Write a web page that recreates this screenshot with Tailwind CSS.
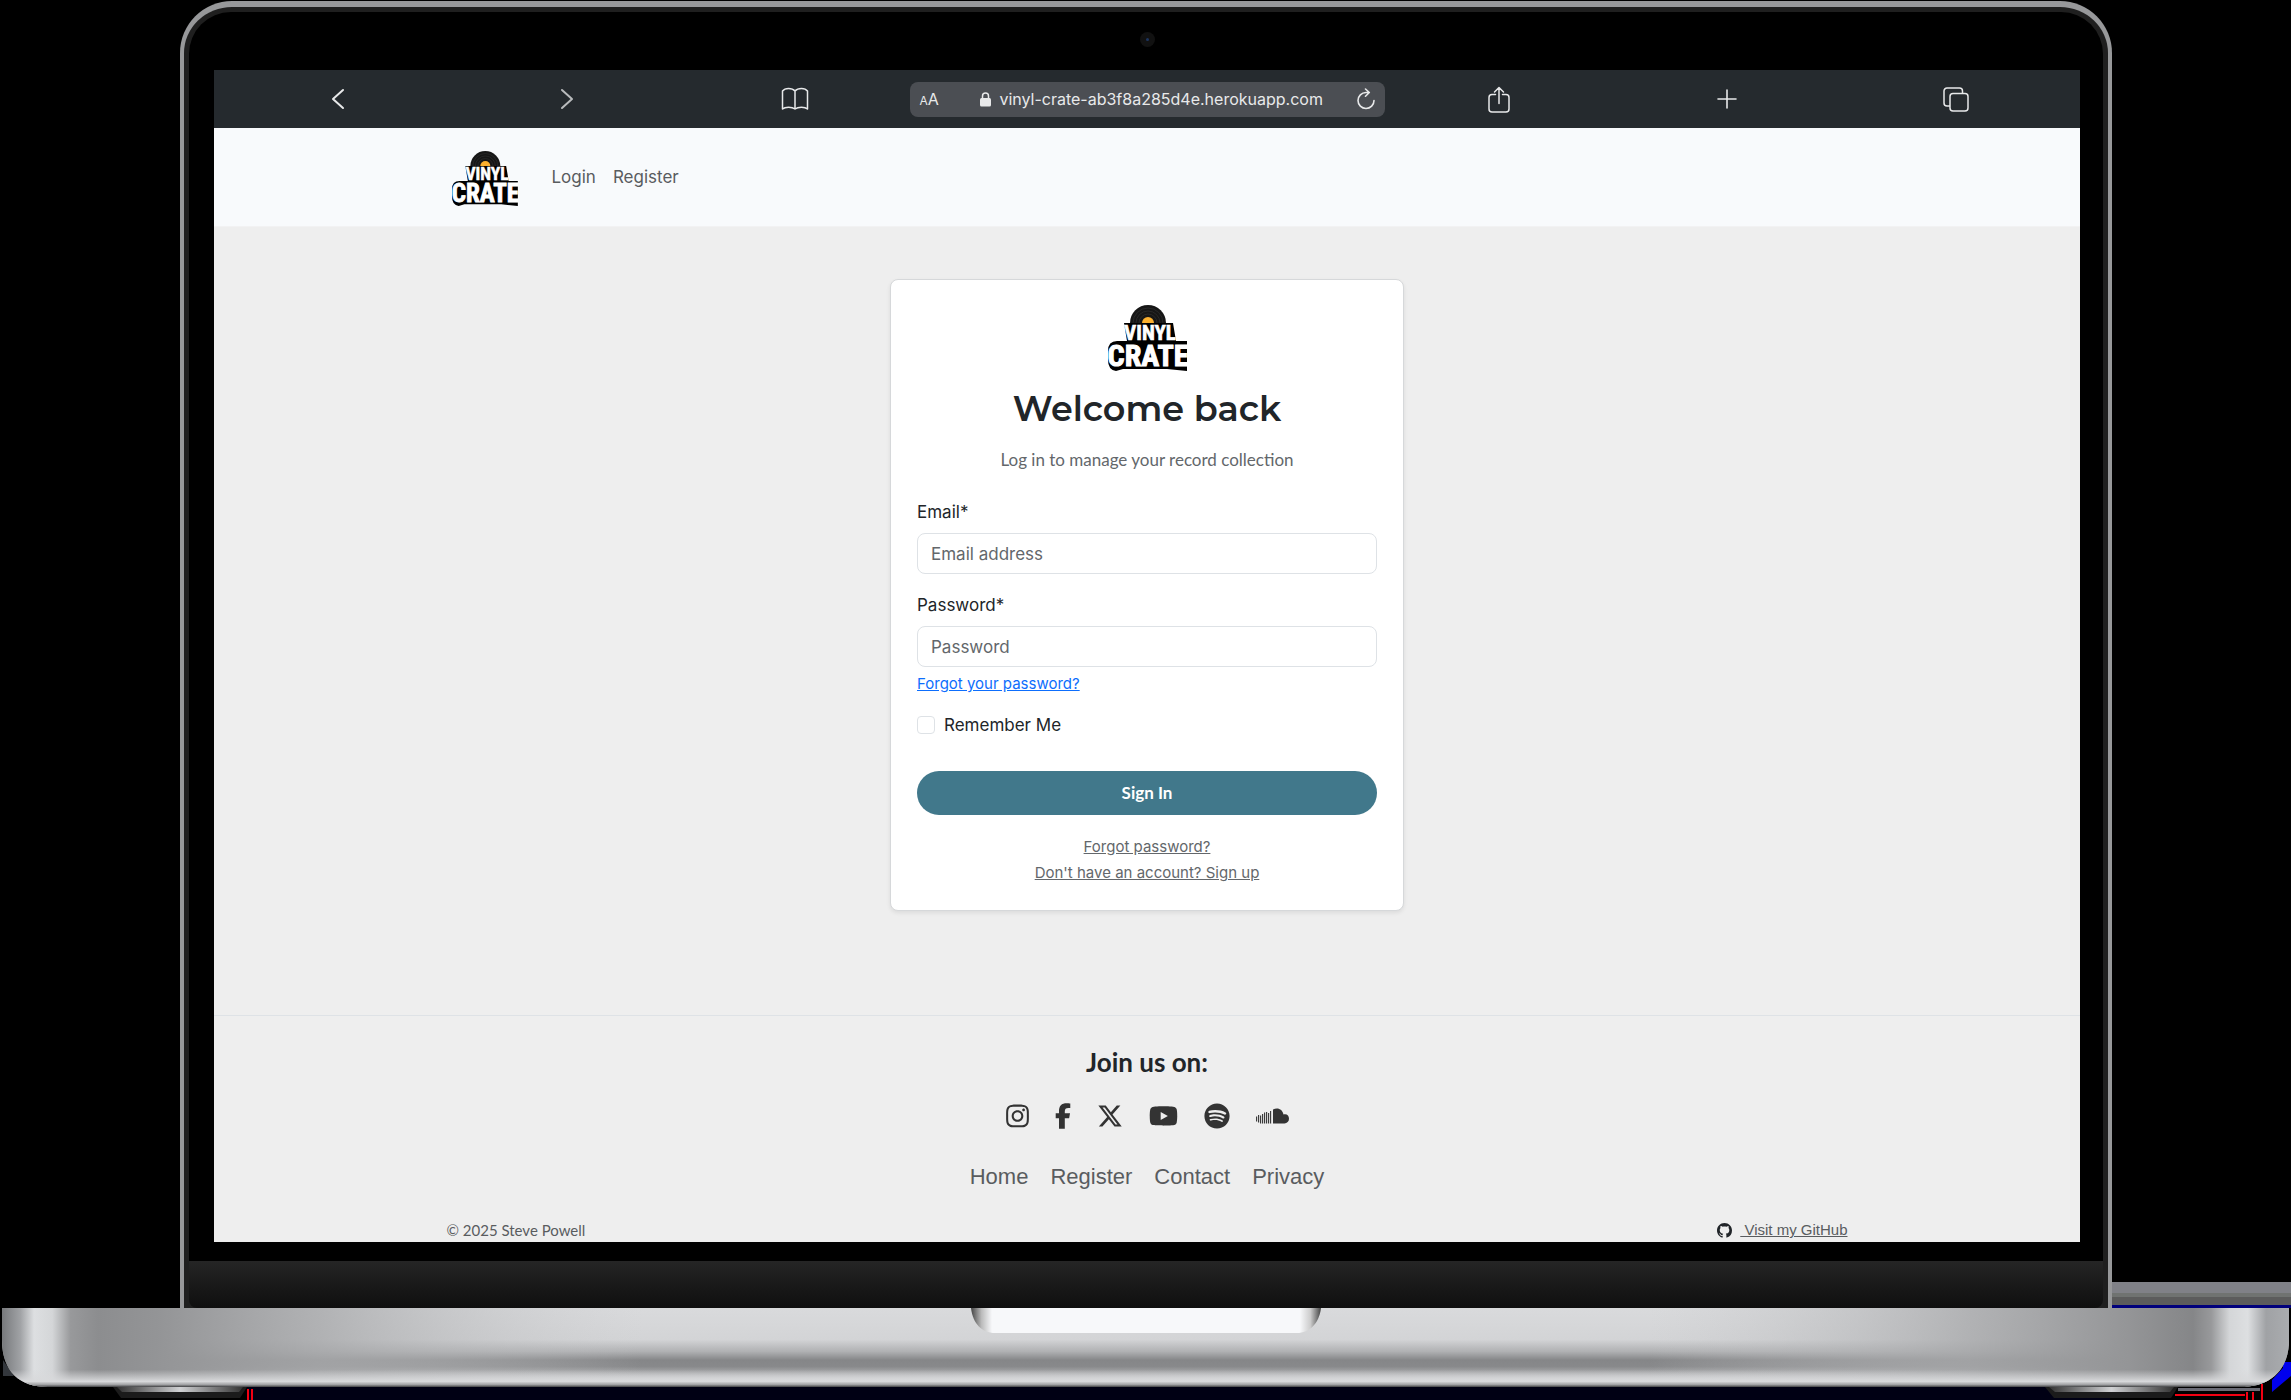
<!DOCTYPE html>
<html lang="en">
<head>
<meta charset="utf-8">
<meta name="viewport" content="width=device-width, initial-scale=1">
<title>Vinyl Crate</title>
<script src="https://cdn.jsdelivr.net/npm/@tailwindcss/browser@4"></script>
</head>
<body class="bg-black font-[Inter,sans-serif] text-[#212529]">
<svg class="hidden">
  <symbol id="logo" viewBox="0 0 80 66">
    <circle cx="41" cy="18" r="18" fill="#161616"/>
    <g fill="none" stroke="#343434" stroke-width=".6"><circle cx="41" cy="18" r="15"/><circle cx="41" cy="18" r="12"/><circle cx="41" cy="18" r="9"/></g>
    <circle cx="41" cy="18" r="6" fill="#fbb02f"/>
    <path d="M17 18H66L69 36H80V66L60 64H16L9 66Q1 65 1 55V46Q1 36 10 36H20Z" fill="#000"/>
    <g font-family="'Liberation Sans Narrow','Roboto Condensed','Liberation Sans',sans-serif" font-weight="700" fill="#fff" text-anchor="middle" stroke="#fff">
      <text x="43" y="35" font-size="21" stroke-width=".6">VINYL</text>
      <text x="41" y="61" font-size="30" stroke-width="1">CRATE</text>
    </g>
  </symbol>
</svg>
<div class="flex h-screen flex-col overflow-hidden">
  <!-- Laptop lid -->
  <div class="relative mr-[179px] ml-[180px] mt-px flex min-h-0 flex-1 flex-col rounded-t-[52px] border-x-4 border-t-[6px] border-[#97989a] bg-[#1f1f1f] px-[5px] pt-[5px]">
    <div class="flex min-h-0 flex-1 flex-col rounded-t-[42px] bg-black pr-[23px] pb-[19px] pl-[25px]">
      <div class="flex h-[58px] shrink-0 items-center justify-center pb-1"><div class="flex size-[15px] items-center justify-center rounded-full bg-[#111]"><div class="size-[3px] rounded-full bg-[#1d3560]"></div></div></div>
      <!-- Browser window -->
      <div class="flex min-h-0 flex-1 flex-col overflow-hidden bg-[#eeeeee]">
        <div class="flex h-[58px] shrink-0 items-center bg-[#252a2e] text-[#e8e9ea]">
          <div class="grid flex-1 grid-cols-3 justify-items-center pl-[10px]">
            <button aria-label="Back"><svg class="h-6 w-6" viewBox="0 0 24 24" fill="none" stroke="currentColor" stroke-width="2" stroke-linecap="round" stroke-linejoin="round"><path d="M17 3 7 12l10 9"/></svg></button>
            <button aria-label="Forward" class="text-[#b9bbbd]"><svg class="h-6 w-6" viewBox="0 0 24 24" fill="none" stroke="currentColor" stroke-width="2" stroke-linecap="round" stroke-linejoin="round"><path d="M7 3 17 12 7 21"/></svg></button>
            <button aria-label="Bookmarks"><svg class="h-6 w-7" viewBox="0 0 28 24" fill="none" stroke="currentColor" stroke-width="1.5" stroke-linejoin="round"><path d="M14 4C11 .5 4 .5 1.500 4V22C4 19.500 11 19.500 14 22 17 19.500 24 19.500 26.500 22V4C24 .5 17 .5 14 4ZM14 4V22"/></svg></button>
          </div>
          <div class="flex h-[35px] w-[475px] items-center rounded-lg bg-[#4b4e53] px-[10px]">
            <button aria-label="Text size" class="flex items-baseline"><span class="text-xs">A</span><span class="text-base">A</span></button>
            <div class="flex flex-1 items-center justify-center gap-2 pl-2">
              <svg class="h-[15px] w-[11px]" viewBox="0 0 11 15"><rect y="6" width="11" height="8.500" rx="1.500" fill="currentColor"/><path d="M2.500 7V4a3 3 0 0 1 6 0v3" fill="none" stroke="currentColor" stroke-width="1.500"/></svg>
              <span class="text-base">vinyl-crate-ab3f8a285d4e.herokuapp.com</span>
            </div>
            <button aria-label="Reload"><svg class="h-[22px] w-[18px]" viewBox="0 0 18 22" fill="none" stroke="currentColor" stroke-width="1.600" stroke-linecap="round" stroke-linejoin="round"><path d="M12 4.500H9A8 8 0 1 0 17 12.500M8.500 1 12.300 4.500 8.500 8.200"/></svg></button>
          </div>
          <div class="grid flex-1 grid-cols-3 justify-items-center pr-[10px]">
            <button aria-label="Share"><svg class="h-[27px] w-[22px]" viewBox="0 0 22 27" fill="none" stroke="currentColor" stroke-width="1.500" stroke-linecap="round" stroke-linejoin="round"><path d="M7.500 8.500H4A3 3 0 0 0 1 11.500V23a3 3 0 0 0 3 3H18a3 3 0 0 0 3-3V11.500a3 3 0 0 0-3-3H14.500M11 17.500V1.500M6.500 6 11 1.500 15.500 6"/></svg></button>
            <button aria-label="New tab"><svg class="h-5 w-5" viewBox="0 0 20 20" stroke="currentColor" stroke-width="1.600" stroke-linecap="round"><path d="M10 1V19M1 10H19"/></svg></button>
            <button aria-label="Tabs"><svg class="h-[25px] w-[26px]" viewBox="0 0 26 25" fill="none" stroke="currentColor" stroke-width="1.500"><rect x="7" y="6.500" width="18" height="17.500" rx="3"/><path d="M7 19H4a3 3 0 0 1-3-3V4A3 3 0 0 1 4 1H16.500a3 3 0 0 1 3 3V6.500"/></svg></button>
          </div>
        </div>
        <!-- Site navigation -->
        <header class="h-[99px] shrink-0 border-b border-[#f2f2f3] bg-[#f8fafc]">
          <nav class="mx-auto flex h-full max-w-[1401px] items-center gap-[17px] pt-[2px] pl-1 text-[17px] text-[#595c5f]">
            <a href="#" aria-label="Vinyl Crate" class="mr-[17px]"><svg class="h-[55px] w-[67px]"><use href="#logo"/></svg></a>
            <a href="#">Login</a>
            <a href="#">Register</a>
          </nav>
        </header>
        <main class="flex shrink-0 justify-center pt-[52px] pb-[104px]">
          <section class="flex w-[514px] flex-col rounded-lg border border-[#d6d8da] bg-white px-[26px] pt-[25px] pb-6 shadow-[0_2px_4px_rgba(0,0,0,0.08)]">
            <svg class="mx-auto h-[66px] w-20"><use href="#logo"/></svg>
            <h1 class="mt-4 text-center font-[Montserrat,Inter,sans-serif] text-[35px] leading-[44px] font-semibold">Welcome back</h1>
            <p class="mt-4 text-center font-[Lato,sans-serif] text-[17px] leading-[26px] text-[#63676b]">Log in to manage your record collection</p>
            <form class="mt-[26px] flex flex-col" onsubmit="return false">
              <label for="email" class="text-[17px] leading-[26px]">Email*</label>
              <input id="email" type="email" placeholder="Email address" class="mt-2 h-[41px] rounded-lg border border-[#dee2e6] bg-white px-[13px] text-[17px] placeholder:text-[#63676b]">
              <label for="password" class="mt-[18px] text-[17px] leading-[26px]">Password*</label>
              <input id="password" type="password" placeholder="Password" class="mt-2 h-[41px] rounded-lg border border-[#dee2e6] bg-white px-[13px] text-[17px] placeholder:text-[#63676b]">
              <a href="#" class="mt-[5px] self-start text-[15px] leading-6 text-[#0d6efd] underline">Forgot your password?</a>
              <div class="mt-[16px] flex items-center gap-[9px]">
                <input id="remember" type="checkbox" class="size-[18px] appearance-none rounded border border-[#dee2e6] bg-white">
                <label for="remember" class="text-[17px] leading-[26px]">Remember Me</label>
              </div>
              <button class="mt-[33px] h-11 rounded-full bg-[#41788b] font-[Lato,sans-serif] text-[17px] font-bold text-white">Sign In</button>
            </form>
            <div class="mt-[19px] flex flex-col items-center text-[15px] leading-[26px] text-[#63676b]">
              <a href="#" class="underline">Forgot password?</a>
              <a href="#" class="underline">Don't have an account? Sign up</a>
            </div>
          </section>
        </main>
        <footer class="shrink-0 border-t border-[#dee2e6]">
          <h2 class="mt-[30px] text-center font-[Lato,sans-serif] text-[26px] leading-8 font-bold">Join us on:</h2>
          <div class="mt-[25px] flex items-center justify-center gap-[26px] text-[#333]">
            <a href="#" aria-label="Instagram"><svg class="h-[26px] w-[23px]" viewBox="0 0 448 512" fill="currentColor"><path d="M224.1 141c-63.600 0-114.900 51.300-114.900 114.900s51.300 114.900 114.900 114.900S339 319.500 339 255.900 287.700 141 224.100 141zm0 189.600c-41.100 0-74.700-33.500-74.700-74.700s33.500-74.700 74.700-74.700 74.700 33.500 74.700 74.700-33.600 74.700-74.700 74.700zm146.400-194.300c0 14.900-12 26.800-26.800 26.800-14.900 0-26.800-12-26.800-26.800s12-26.800 26.800-26.800 26.800 12 26.800 26.800zm76.100 27.200c-1.700-35.900-9.900-67.700-36.200-93.900-26.200-26.200-58-34.400-93.900-36.200-37-2.100-147.900-2.100-184.900 0-35.800 1.700-67.600 9.900-93.900 36.100s-34.400 58-36.200 93.900c-2.100 37-2.100 147.900 0 184.900 1.700 35.900 9.900 67.700 36.200 93.900s58 34.400 93.900 36.200c37 2.100 147.900 2.100 184.900 0 35.900-1.700 67.700-9.900 93.900-36.200 26.200-26.200 34.400-58 36.200-93.900 2.100-37 2.100-147.800 0-184.800zM398.800 388c-7.800 19.600-22.900 34.700-42.600 42.600-29.500 11.700-99.500 9-132.100 9s-102.700 2.600-132.100-9c-19.600-7.800-34.700-22.900-42.600-42.600-11.700-29.500-9-99.500-9-132.100s-2.600-102.700 9-132.100c7.800-19.600 22.900-34.700 42.600-42.600 29.500-11.700 99.500-9 132.100-9s102.700-2.600 132.100 9c19.600 7.800 34.700 22.900 42.600 42.600 11.700 29.500 9 99.500 9 132.100s2.700 102.700-9 132.100z"/></svg></a>
            <a href="#" aria-label="Facebook"><svg class="h-[26px] w-[16px]" viewBox="0 0 320 512" fill="currentColor"><path d="M80 299.300V512H196V299.300h86.500l18-97.800H196V166.900c0-51.700 20.300-71.500 72.700-71.500c16.300 0 29.400 .4 37 1.200V7.900C291.400 4 256.400 0 236.200 0C129.300 0 80 50.500 80 159.400v42.100H14v97.800H80z"/></svg></a>
            <a href="#" aria-label="X"><svg class="size-[26px]" viewBox="0 0 512 512" fill="currentColor"><path d="M389.200 48h70.600L305.600 224.200 487 464H345L233.700 318.600 106.500 464H35.800L200.700 275.500 26.800 48H172.400L272.900 180.900 389.200 48zM364.400 421.800h39.100L151.100 88h-42L364.400 421.800z"/></svg></a>
            <a href="#" aria-label="YouTube"><svg class="h-[26px] w-[29px]" viewBox="0 0 576 512" fill="currentColor"><path d="M549.655 124.083c-6.281-23.650-24.787-42.276-48.284-48.597C458.781 64 288 64 288 64S117.220 64 74.629 75.486c-23.497 6.322-42.003 24.947-48.284 48.597-11.412 42.867-11.412 132.305-11.412 132.305s0 89.438 11.412 132.305c6.281 23.650 24.787 41.500 48.284 47.821C117.220 448 288 448 288 448s170.780 0 213.371-11.486c23.497-6.321 42.003-24.171 48.284-47.821 11.412-42.867 11.412-132.305 11.412-132.305s0-89.438-11.412-132.305zm-317.510 213.508V175.185l142.739 81.205-142.739 81.201z"/></svg></a>
            <a href="#" aria-label="Spotify"><svg class="size-[26px]" viewBox="0 0 496 512" fill="currentColor"><path d="M248 8C111.100 8 0 119.100 0 256s111.100 248 248 248 248-111.100 248-248S384.900 8 248 8zm100.700 364.900c-4.200 0-6.800-1.300-10.700-3.600-62.400-37.600-135-39.200-206.700-24.500-3.900 1-9 2.600-11.900 2.600-9.700 0-15.800-7.700-15.800-15.800 0-10.300 6.100-15.200 13.600-16.800 81.900-18.100 165.600-16.500 237 26.200 6.100 3.900 9.700 7.400 9.700 16.500s-7.100 15.400-15.200 15.400zm26.900-65.600c-5.200 0-8.700-2.300-12.300-4.200-62.500-37-155.700-51.900-238.600-29.400-4.800 1.300-7.400 2.600-11.900 2.600-10.700 0-19.400-8.700-19.400-19.400s5.200-17.800 15.500-20.700c27.800-7.800 56.200-13.600 97.800-13.600 64.900 0 127.600 16.100 177 45.500 8.100 4.800 11.300 11 11.300 19.700-.1 10.800-8.500 19.500-19.400 19.500zm31-76.200c-5.200 0-8.400-1.300-12.900-3.900-71.200-42.500-198.500-52.700-280.900-29.700-3.600 1-8.100 2.600-12.900 2.600-13.200 0-23.300-10.300-23.300-23.600 0-13.600 8.400-21.300 17.400-23.900 35.200-10.300 74.600-15.200 117.500-15.200 73 0 149.500 15.200 205.400 47.800 7.800 4.500 12.900 10.700 12.900 22.600 0 13.600-11 23.300-23.200 23.300z"/></svg></a>
            <a href="#" aria-label="SoundCloud"><svg class="h-[26px] w-[33px]" viewBox="0 0 33 26" fill="currentColor"><path d="M17 6.500C22 4 26.500 6.500 27.500 11.500 31 10.500 33 13 33 15.800 33 18.500 31 20.500 28.500 20.500H17Z"/><path d="M.6 13.500v5M2.600 12v7.500M4.600 12.500v8M6.600 11v9.500M8.600 9.500v11M10.600 9v11.500M12.600 10v10.500M14.600 8v12.500" stroke="currentColor" stroke-width="1.100"/></svg></a>
          </div>
          <nav class="mt-[32px] flex justify-center gap-[22px] font-['Liberation_Sans',sans-serif] text-[22px] leading-8 text-[#595c5f]">
            <a href="#">Home</a><a href="#">Register</a><a href="#">Contact</a><a href="#">Privacy</a>
          </nav>
          <div class="mx-auto mt-[25px] flex max-w-[1401px] items-center justify-between text-[15px] leading-6 text-[#595c5f]">
            <p class="font-[Lato,sans-serif]">© 2025 Steve Powell</p>
            <a href="#" class="flex items-center gap-2 font-['Liberation_Sans',sans-serif]"><svg class="size-[15px] text-[#212529]" viewBox="0 0 16 16" fill="currentColor"><path d="M8 0C3.580 0 0 3.580 0 8c0 3.540 2.290 6.530 5.470 7.590.4.070.55-.17.55-.38 0-.19-.01-.82-.01-1.490-2.010.37-2.530-.49-2.690-.94-.09-.23-.48-.94-.82-1.130-.28-.15-.68-.52-.01-.53.63-.01 1.080.58 1.230.82.72 1.210 1.870.87 2.330.66.070-.52.28-.87.51-1.070-1.780-.2-3.640-.89-3.640-3.950 0-.87.31-1.590.82-2.150-.08-.2-.36-1.020.08-2.120 0 0 .67-.21 2.200.82.64-.18 1.320-.27 2-.27s1.360.09 2 .27c1.530-1.040 2.200-.82 2.200-.82.44 1.100.16 1.920.08 2.120.51.56.82 1.270.82 2.150 0 3.070-1.870 3.750-3.650 3.950.29.25.54.73.54 1.480 0 1.070-.01 1.930-.01 2.200 0 .21.15.46.55.38A8.010 8.010 0 0 0 16 8c0-4.420-3.580-8-8-8z"/></svg><span class="whitespace-pre underline"> Visit my GitHub</span></a>
          </div>
        </footer>
      </div>
    </div>
    <div class="h-[47px] shrink-0 rounded-b-lg bg-linear-to-b from-[#252525] to-[#0f0f0f]"></div>
    <!-- Banded strip beside the hinge -->
    <div class="absolute bottom-0 left-full ml-1 flex h-[26px] w-[180px] flex-col"><div class="h-[11px] bg-[#808187]"></div><div class="h-1 bg-[#707371]"></div><div class="h-2 bg-[#5c5c5c]"></div><div class="h-[3px] bg-[#00007c]"></div></div>
  </div>
  <!-- Laptop base -->
  <svg class="block h-[92px] w-full shrink-0" viewBox="0 0 2291 92" preserveAspectRatio="none">
    <defs>
      <linearGradient id="v" x2="0" y2="1"><stop offset="0" stop-color="#d9dadc"/><stop offset=".4" stop-color="#d3d4d6"/><stop offset=".55" stop-color="#b0b1b3"/><stop offset=".66" stop-color="#858688"/><stop offset=".74" stop-color="#88898b"/><stop offset=".86" stop-color="#b8b9bb"/><stop offset=".94" stop-color="#d8d9db"/><stop offset=".97" stop-color="#a0a1a3"/><stop offset="1" stop-color="#4a4b4d"/></linearGradient>
      <linearGradient id="h"><stop offset="0" stop-color="#77797c"/><stop offset=".008" stop-color="#a0a2a5"/><stop offset=".014" stop-color="#dddfe1"/><stop offset=".022" stop-color="#d4d6d8"/><stop offset=".03" stop-color="#98999b"/><stop offset=".042" stop-color="#8c8d8f"/><stop offset=".07" stop-color="#949597"/><stop offset=".14" stop-color="#a8a9ab" stop-opacity=".8"/><stop offset=".28" stop-color="#c8c9cb" stop-opacity="0"/><stop offset=".72" stop-color="#c8c9cb" stop-opacity="0"/><stop offset=".86" stop-color="#a8a9ab" stop-opacity=".8"/><stop offset=".93" stop-color="#949597"/><stop offset=".958" stop-color="#858688"/><stop offset=".966" stop-color="#98999b"/><stop offset=".974" stop-color="#d4d6d8"/><stop offset=".982" stop-color="#dddfe1"/><stop offset=".99" stop-color="#a0a2a5"/><stop offset="1" stop-color="#aaacaf"/></linearGradient>
      <linearGradient id="l" x2="0" y2="1"><stop offset=".78" stop-color="#d8d9db" stop-opacity="0"/><stop offset=".93" stop-color="#d8d9db"/><stop offset=".97" stop-color="#a0a1a3"/><stop offset="1" stop-color="#3f4042"/></linearGradient>
      <linearGradient id="n"><stop offset="0" stop-color="#444"/><stop offset=".03" stop-color="#bbb"/><stop offset=".06" stop-color="#f7f8fa"/><stop offset=".94" stop-color="#f7f8fa"/><stop offset=".97" stop-color="#ccc"/><stop offset="1" stop-color="#444"/></linearGradient>
      <linearGradient id="f"><stop offset="0" stop-color="#333"/><stop offset=".5" stop-color="#d0d1d3"/><stop offset="1" stop-color="#333"/></linearGradient>
    </defs>
    <path d="M247 78H2110V92H247Z" fill="#000014"/>
    <path d="M248 81V92M252 81V92M2175 87H2245M2247 84V92M2253 84V92M2262 76V92" stroke="#f20012" stroke-width="2"/>
    <path d="M2291 54V68L2272 84V72L2283 60V54Z" fill="#0000ee"/>
    <path d="M2178 80H2260V83H2178Z" fill="#6a6b75"/>
    <path d="M3 52V68H14Z" fill="#33373c"/>
    <path d="M113 79H247L240 90H121ZM2045 79H2178L2171 90H2054Z" fill="#1b1b1b"/>
    <path d="M117 79H243L239 84H122Z" fill="url(#f)"/>
    <path d="M2049 79H2174L2170 84H2055Z" fill="url(#f)"/>
    <path d="M2 0H2289V32C2289 64 2268 79 2240 79H48C20 79 2 64 2 32Z" fill="url(#v)"/>
    <path d="M2 0H2289V32C2289 64 2268 79 2240 79H48C20 79 2 64 2 32Z" fill="url(#h)"/>
    <path d="M2 0H2289V32C2289 64 2268 79 2240 79H48C20 79 2 64 2 32Z" fill="url(#l)"/>
    <path d="M971 0H1321C1319 16 1309 25 1297 25H995C982 25 973 16 971 0Z" fill="url(#n)"/>
  </svg>
</div>
</body>
</html>
